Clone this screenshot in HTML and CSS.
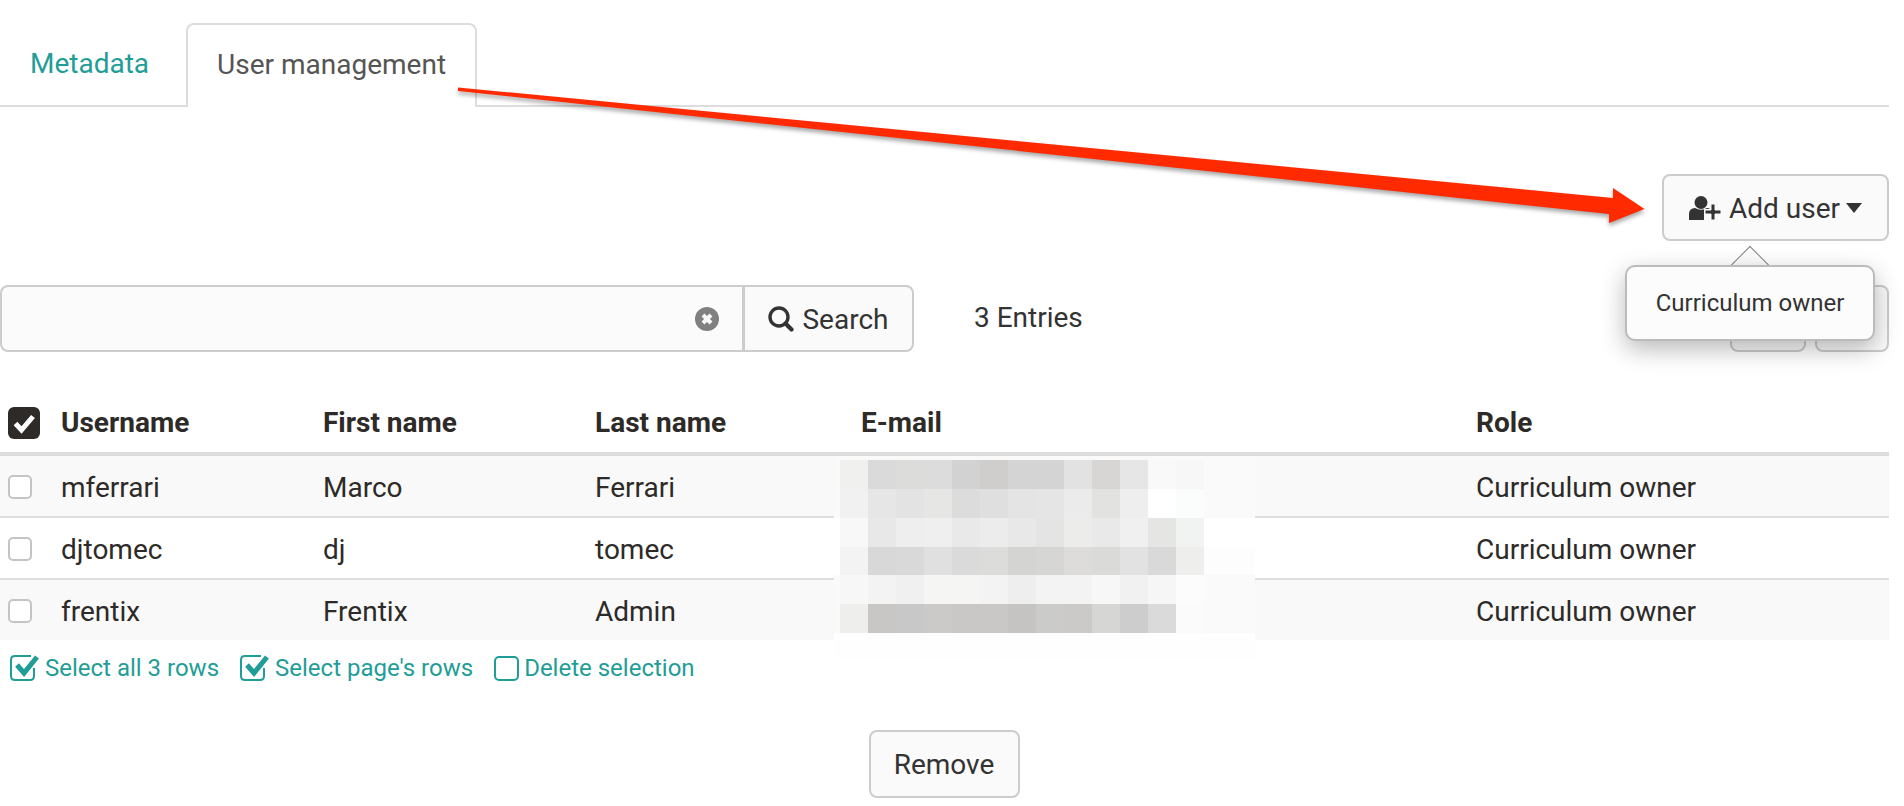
FILE: index.html
```html
<!DOCTYPE html>
<html lang="en">
<head>
    <meta charset="UTF-8">
    <title>User management</title>
    <link rel="stylesheet" href="styles.css">
</head>
<body>

    <div class="page">

        <!-- Tabs -->
        <nav class="tabs">
            <a class="tab">Metadata</a>
            <a class="tab active">User management</a>
        </nav>

        <!-- Add user -->
        <div class="toolbar">
            <div class="add-wrap">
                <button class="btn add-btn" type="button">
                    <svg class="icon-user" viewBox="0 0 32 24">
                        <circle cx="12" cy="6.500" r="6.500"/>
                        <path d="M0 24 L0 18 Q0 12.500 6 12 Q12 15.500 18 12 Q20 12.200 21 13 L15 13 L15 24 Z"/>
                        <path d="M22 8 h4 v6 h6 v4 h-6 v6 h-4 v-6 h-6 v-4 h6 z" stroke="#fafafa" stroke-width="1"/>
                    </svg>
                    Add user
                    <span class="caret"></span>
                </button>
                <div class="popover">
                    <span class="popover-arrow"></span>
                    <div class="popover-body">Curriculum owner</div>
                </div>
            </div>
        </div>

        <!-- Search -->
        <div class="search-row">
            <div class="search-field">
                <svg class="icon-clear" viewBox="0 0 24 24">
                    <circle cx="12" cy="12" r="12" fill="#808080"/>
                    <path d="M8 8 L16 16 M16 8 L8 16" stroke="#fafafa" stroke-width="4"/>
                </svg>
            </div>
            <button class="btn search-btn" type="button">
                <svg class="icon-search" viewBox="0 0 26 26">
                    <circle cx="11" cy="11" r="9" fill="none" stroke="#333" stroke-width="3.400"/>
                    <path d="M17.500 17.500 L23.500 23.500" stroke="#333" stroke-width="4.200" stroke-linecap="round"/>
                </svg>
                Search
            </button>
            <span class="entries">3 Entries</span>
            <div class="view-btns">
                <button class="btn view-btn" type="button"></button>
                <button class="btn view-btn small" type="button"></button>
            </div>
        </div>

        <!-- Table -->
        <table class="users">
            <colgroup>
                <col class="col-check">
                <col class="col-user">
                <col class="col-first">
                <col class="col-last">
                <col class="col-mail">
                <col>
            </colgroup>
            <thead>
                <tr>
                    <th>
                        <svg class="check-all" viewBox="0 0 32 32">
                            <rect width="32" height="32" rx="6" fill="#2d2a28"/>
                            <path d="M7.500 16.500 L13.500 23 L25 9.500" fill="none" stroke="#fff" stroke-width="5"/>
                        </svg>
                    </th>
                    <th>Username</th>
                    <th>First name</th>
                    <th>Last name</th>
                    <th>E-mail</th>
                    <th>Role</th>
                </tr>
            </thead>
            <tbody>
                <tr>
                    <td><span class="check"></span></td>
                    <td>mferrari</td>
                    <td>Marco</td>
                    <td>Ferrari</td>
                    <td></td>
                    <td>Curriculum owner</td>
                </tr>
                <tr>
                    <td><span class="check"></span></td>
                    <td>djtomec</td>
                    <td>dj</td>
                    <td>tomec</td>
                    <td></td>
                    <td>Curriculum owner</td>
                </tr>
                <tr>
                    <td><span class="check"></span></td>
                    <td>frentix</td>
                    <td>Frentix</td>
                    <td>Admin</td>
                    <td></td>
                    <td>Curriculum owner</td>
                </tr>
            </tbody>
        </table>

        <!-- Selection links -->
        <div class="selection">
            <a class="sel-link">
                <svg class="icon-sel" viewBox="0 0 29 26">
                    <path d="M24 13 V21 Q24 25 20 25 H5 Q1 25 1 21 V5 Q1 1 5 1 H21" fill="none" stroke="#1f9d97" stroke-width="2"/>
                    <path d="M7 10 L14 18 L27 2" fill="none" stroke="#1f9d97" stroke-width="5"/>
                </svg>
                Select all 3 rows
            </a>
            <a class="sel-link">
                <svg class="icon-sel" viewBox="0 0 29 26">
                    <path d="M24 13 V21 Q24 25 20 25 H5 Q1 25 1 21 V5 Q1 1 5 1 H21" fill="none" stroke="#1f9d97" stroke-width="2"/>
                    <path d="M7 10 L14 18 L27 2" fill="none" stroke="#1f9d97" stroke-width="5"/>
                </svg>
                Select page's rows
            </a>
            <a class="sel-link">
                <span class="icon-empty"></span>
                Delete selection
            </a>
        </div>

        <div class="actions">
            <button class="btn remove-btn" type="button">Remove</button>
        </div>
    </div>

    <!-- Pixelated e-mail addresses -->
    <svg class="mosaic" viewBox="834 456 421 204">
        <rect x="834" y="456" width="421" height="62" fill="#fafafa"/>
        <rect x="834" y="518" width="421" height="57" fill="#fff"/>
        <rect x="834" y="575" width="421" height="58" fill="#fafafa"/>
        <rect x="834" y="633" width="421" height="27" fill="#fefefe"/>

        <rect x="840" y="460" width="28" height="29" fill="#f0f0ee"/><rect x="868" y="460" width="28" height="29" fill="#dadada"/><rect x="896" y="460" width="28" height="29" fill="#dcdcda"/><rect x="924" y="460" width="28" height="29" fill="#dcdcdc"/><rect x="952" y="460" width="28" height="29" fill="#d2d2d2"/><rect x="980" y="460" width="28" height="29" fill="#cfcecc"/><rect x="1008" y="460" width="28" height="29" fill="#d4d4d4"/><rect x="1036" y="460" width="28" height="29" fill="#d4d4d4"/><rect x="1064" y="460" width="28" height="29" fill="#e2e2e2"/><rect x="1092" y="460" width="28" height="29" fill="#d7d6d4"/><rect x="1120" y="460" width="28" height="29" fill="#e6e6e6"/><rect x="1148" y="460" width="28" height="29" fill="#f9f9f9"/><rect x="1176" y="460" width="28" height="29" fill="#f7f7f7"/>

        <rect x="840" y="489" width="28" height="29" fill="#f1f1f1"/><rect x="868" y="489" width="28" height="29" fill="#e6e6e6"/><rect x="896" y="489" width="28" height="29" fill="#e3e3e3"/><rect x="924" y="489" width="28" height="29" fill="#e6e6e4"/><rect x="952" y="489" width="28" height="29" fill="#dcdcdc"/><rect x="980" y="489" width="28" height="29" fill="#dfdfdf"/><rect x="1008" y="489" width="28" height="29" fill="#e4e4e4"/><rect x="1036" y="489" width="28" height="29" fill="#e5e5e5"/><rect x="1064" y="489" width="28" height="29" fill="#ebebeb"/><rect x="1092" y="489" width="28" height="29" fill="#e2e2e0"/><rect x="1120" y="489" width="28" height="29" fill="#eeeeee"/><rect x="1148" y="489" width="28" height="29" fill="#ffffff"/><rect x="1176" y="489" width="28" height="29" fill="#fbfcfc"/>

        <rect x="840" y="518" width="28" height="29" fill="#f8f8f8"/><rect x="868" y="518" width="28" height="29" fill="#e8e8e8"/><rect x="896" y="518" width="28" height="29" fill="#eeeeee"/><rect x="924" y="518" width="28" height="29" fill="#efefef"/><rect x="952" y="518" width="28" height="29" fill="#e9e9e9"/><rect x="980" y="518" width="28" height="29" fill="#ececec"/><rect x="1008" y="518" width="28" height="29" fill="#e8e8e8"/><rect x="1036" y="518" width="28" height="29" fill="#e4e4e4"/><rect x="1064" y="518" width="28" height="29" fill="#ececea"/><rect x="1092" y="518" width="28" height="29" fill="#e9e9e9"/><rect x="1120" y="518" width="28" height="29" fill="#f0f0f0"/><rect x="1148" y="518" width="28" height="29" fill="#e5e5e3"/><rect x="1176" y="518" width="28" height="29" fill="#f1f2f2"/>

        <rect x="840" y="547" width="28" height="28" fill="#f3f3f3"/><rect x="868" y="547" width="28" height="28" fill="#d8d8d8"/><rect x="896" y="547" width="28" height="28" fill="#d9d9d9"/><rect x="924" y="547" width="28" height="28" fill="#e0e0e0"/><rect x="952" y="547" width="28" height="28" fill="#dadada"/><rect x="980" y="547" width="28" height="28" fill="#dcdcda"/><rect x="1008" y="547" width="28" height="28" fill="#d4d4d2"/><rect x="1036" y="547" width="28" height="28" fill="#d6d6d4"/><rect x="1064" y="547" width="28" height="28" fill="#dddcda"/><rect x="1092" y="547" width="28" height="28" fill="#dadad8"/><rect x="1120" y="547" width="28" height="28" fill="#e2e2e2"/><rect x="1148" y="547" width="28" height="28" fill="#d9d9d9"/><rect x="1176" y="547" width="28" height="28" fill="#eeeeec"/><rect x="1204" y="547" width="51" height="28" fill="#fdfdfd"/>

        <rect x="840" y="575" width="28" height="29" fill="#f7f7f7"/><rect x="868" y="575" width="28" height="29" fill="#f3f3f3"/><rect x="896" y="575" width="28" height="29" fill="#f0f0f0"/><rect x="924" y="575" width="28" height="29" fill="#f5f5f3"/><rect x="952" y="575" width="28" height="29" fill="#f5f5f3"/><rect x="980" y="575" width="28" height="29" fill="#f3f3f3"/><rect x="1008" y="575" width="28" height="29" fill="#eeeeee"/><rect x="1036" y="575" width="28" height="29" fill="#f3f3f3"/><rect x="1064" y="575" width="28" height="29" fill="#f3f3f3"/><rect x="1092" y="575" width="28" height="29" fill="#f7f7f7"/><rect x="1120" y="575" width="28" height="29" fill="#f1f1f1"/><rect x="1148" y="575" width="28" height="29" fill="#f6f6f6"/><rect x="1176" y="575" width="28" height="29" fill="#fcfcfc"/>

        <rect x="840" y="604" width="28" height="29" fill="#eeeeec"/><rect x="868" y="604" width="28" height="29" fill="#c8c7c5"/><rect x="896" y="604" width="28" height="29" fill="#c8c8c8"/><rect x="924" y="604" width="28" height="29" fill="#cbcac8"/><rect x="952" y="604" width="28" height="29" fill="#c9c8c6"/><rect x="980" y="604" width="28" height="29" fill="#c9c8c6"/><rect x="1008" y="604" width="28" height="29" fill="#c5c4c2"/><rect x="1036" y="604" width="28" height="29" fill="#cbcbc9"/><rect x="1064" y="604" width="28" height="29" fill="#cbcac8"/><rect x="1092" y="604" width="28" height="29" fill="#d6d6d4"/><rect x="1120" y="604" width="28" height="29" fill="#cdcdcd"/><rect x="1148" y="604" width="28" height="29" fill="#dadada"/><rect x="1176" y="604" width="28" height="29" fill="#fbfbfb"/>
    </svg>

    <!-- Annotation arrow -->
    <svg class="arrow" viewBox="0 0 1904 806">
        <path d="M458 87.500 L1613 198 L1613 188 L1644.500 209 L1609 223 L1609 214 L458 91 Z" fill="#ff2a00"/>
    </svg>

</body>
</html>
```

FILE: styles.css
```css
* {
    box-sizing: border-box;
}

html, body {
    height: 806px;
    overflow: hidden;
}

body {
    font-family: Roboto, sans-serif;
    font-size: 28px;
    margin: 0;
    background: #fff;
    color: #333;
    position: relative;
}

.page {
    width: 1889px;
}

/* tabs */
.tabs {
    display: flex;
    align-items: flex-end;
    padding-top: 23px;
    height: 107px;
    border-bottom: 2px solid #ddd;
}

.tab {
    padding: 0 30px;
    height: 82px;
    line-height: 82px;
    color: #1f9d97;
    margin-right: 7px;
}

.tab.active {
    color: #555;
    background: #fff;
    padding: 0 29px;
    border: 2px solid #ddd;
    border-bottom: none;
    border-radius: 8px 8px 0 0;
    margin-right: 0;
    line-height: 80px;
    height: 84px;
    margin-bottom: -2px;
}

/* buttons */
.btn {
    font-family: inherit;
    font-size: 28px;
    color: #333;
    background: #fafafa;
    border: 2px solid #ccc;
    border-radius: 8px;
    height: 67px;
    padding: 1px 0 0;
}

.toolbar {
    display: flex;
    justify-content: flex-end;
    margin-top: 67px;
}

.add-wrap {
    position: relative;
}

.add-btn {
    width: 227px;
    display: flex;
    align-items: center;
    justify-content: center;
    gap: 8px;
}

.icon-user {
    width: 32px;
    height: 24px;
    fill: #333;
}

.caret {
    border-top: 10px solid #333;
    border-left: 8px solid transparent;
    border-right: 8px solid transparent;
    margin-left: -2px;
}

.popover {
    position: absolute;
    top: 91px;
    left: -37px;
    width: 250px;
    height: 76px;
    z-index: 5;
}

.popover-arrow {
    position: absolute;
    left: 110px;
    top: -13px;
    width: 30px;
    height: 30px;
    background: #fcfcfc;
    border: 1px solid #808080;
    border-right: none;
    border-bottom: none;
    transform: rotate(45deg);
}

.popover-body {
    position: relative;
    height: 76px;
    line-height: 72px;
    text-align: center;
    font-size: 24px;
    background: #fcfcfc;
    border: 2px solid #bbb;
    border-radius: 10px;
    box-shadow: 0 8px 24px rgba(0,0,0,0.28);
}

/* search */
.search-row {
    display: flex;
    align-items: center;
    margin-top: 44px;
    height: 67px;
}

.search-field {
    width: 744px;
    height: 67px;
    background: #fbfbfb;
    border: 2px solid #ccc;
    border-radius: 8px 0 0 8px;
    display: flex;
    align-items: center;
    justify-content: flex-end;
    padding-right: 23px;
}

.icon-clear {
    width: 24px;
    height: 24px;
}

.search-btn {
    width: 171px;
    margin-left: -1px;
    border-radius: 0 8px 8px 0;
    display: flex;
    align-items: center;
    justify-content: center;
    gap: 8px;
}

.icon-search {
    width: 26px;
    height: 26px;
}

.entries {
    margin-left: 60px;
    margin-top: -2px;
    flex: 1;
}

.view-btns {
    display: flex;
    gap: 9px;
}

.view-btn {
    width: 76px;
}

.view-btn.small {
    width: 74px;
}

/* table */
.users {
    width: 100%;
    margin-top: 40px;
    border-collapse: separate;
    border-spacing: 0;
    table-layout: fixed;
}

.col-check {
    width: 61px;
}

.col-user {
    width: 262px;
}

.col-first {
    width: 272px;
}

.col-last {
    width: 266px;
}

.col-mail {
    width: 615px;
}

th, td {
    padding: 0;
    text-align: left;
    color: #2d2a28;
}

th {
    height: 64px;
    padding-top: 1px;
    font-weight: bold;
    border-bottom: 4px solid #ddd;
}

td {
    height: 62px;
    padding-top: 2px;
    border-bottom: 2px solid #ddd;
}

tbody tr:nth-child(odd) td {
    background: #f9f9f9;
}

tbody tr:last-child td {
    height: 60px;
    border-bottom: none;
}

th:first-child, td:first-child {
    padding-left: 8px;
}

.check-all {
    display: block;
    width: 32px;
    height: 32px;
}

.check {
    display: block;
    width: 24px;
    height: 24px;
    background: #fff;
    border: 2px solid #c4c4c4;
    border-radius: 5px;
}

/* selection links */
.selection {
    display: flex;
    align-items: center;
    gap: 21px;
    margin-top: 13px;
    padding-left: 10px;
    height: 30px;
    font-size: 24px;
    color: #1f9d97;
}

.sel-link {
    display: flex;
    align-items: center;
    gap: 6px;
}

.icon-sel {
    width: 29px;
    height: 26px;
}

.icon-empty {
    width: 25px;
    height: 25px;
    border: 2px solid #1f9d97;
    border-radius: 5px;
    margin-right: -1px;
}

.actions {
    display: flex;
    justify-content: center;
    margin-top: 47px;
}

.remove-btn {
    width: 151px;
    height: 68px;
    margin-left: -1px;
}

/* overlays */
.mosaic {
    position: absolute;
    left: 834px;
    top: 456px;
    width: 421px;
    height: 204px;
}

.arrow {
    position: absolute;
    left: 0;
    top: 0;
    width: 1904px;
    height: 806px;
    pointer-events: none;
    z-index: 10;
    filter: drop-shadow(0 3px 2px rgba(0,0,0,0.35));
}
```
